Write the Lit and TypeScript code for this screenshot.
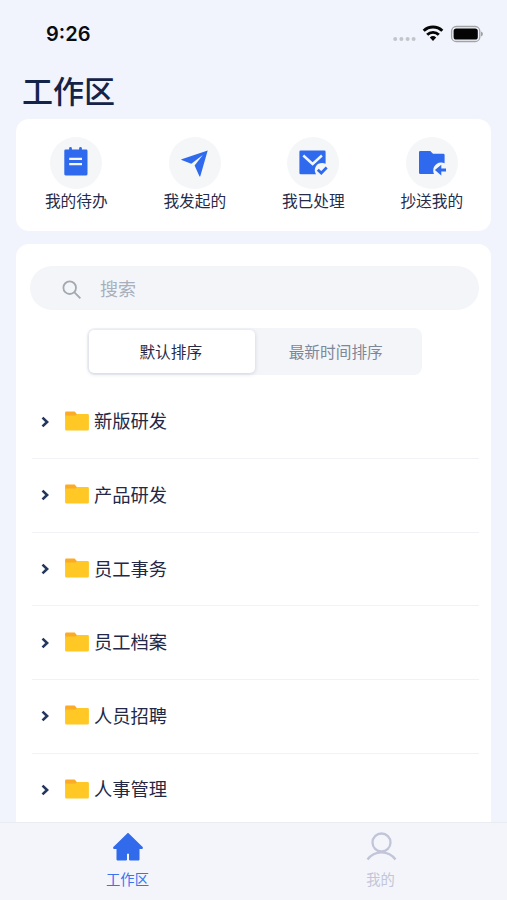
import { LitElement, html, css, svg } from "lit";
import { customElement } from "lit/decorators.js";
import { classMap } from "lit/directives/class-map.js";

const actions = [
  {
    label: "我的待办",
    icon: svg`<path fill="#2f69ee" d="M15.600 12.600h3.500v-1.100a1.400 1.400 0 0 1 2.800 0v1.100h7.200v-1.100a1.400 1.400 0 0 1 2.800 0v1.100h4.300a1.300 1.300 0 0 1 1.300 1.300v23.200a1.300 1.300 0 0 1-1.300 1.300h-20.600a1.300 1.300 0 0 1-1.300-1.300v-23.200a1.300 1.300 0 0 1 1.300-1.300z"/>
      <path stroke="#f4f6f9" stroke-width="2.300" d="M19.200 21.900h12.800M19.200 27.200h12.800"/>`,
  },
  {
    label: "我发起的",
    icon: svg`<path fill="#2f69ee" d="M38.700 13.600 12.600 22.300a.4.4 0 0 0 0 .8l9.700 3.600 11.500-8.700-8.200 10.600 4.800 10.700a.5.5 0 0 0 .9-.1z"/>`,
  },
  {
    label: "我已处理",
    icon: svg`<path fill="#2f69ee" d="M13.700 13.400h23.600a1.300 1.300 0 0 1 1.300 1.300v12.100a7.300 7.300 0 0 0-10.800 6.200c0 1.700.5 3.100 1.300 4.300H13.700a1.300 1.300 0 0 1-1.300-1.300V14.700a1.300 1.300 0 0 1 1.300-1.300z"/>
      <path fill="none" stroke="#f4f6f9" stroke-width="2.400" d="m16.300 18.500 9.300 8.500 9.300-8.500"/>
      <path fill="none" stroke="#2f69ee" stroke-width="2.700" d="m30.800 32.700 3.500 3.300 5.400-5.500"/>`,
  },
  {
    label: "抄送我的",
    icon: svg`<path fill="#2f69ee" d="M14.300 13.900h10l2.700 2.900h10.300a1.300 1.300 0 0 1 1.300 1.300v8.200a8 8 0 0 0-11.400 7.100 8 8 0 0 0 .8 3.600H14.300a1.300 1.300 0 0 1-1.300-1.300V15.200a1.300 1.300 0 0 1 1.300-1.300z"/>
      <path fill="#2f69ee" d="m28.900 33.100 6.400-5.300v3.800h4.700v3h-4.700v3.800z"/>`,
  },
];

const folders = ["新版研发", "产品研发", "员工事务", "员工档案", "人员招聘", "人事管理"];

@customElement("status-bar")
class StatusBar extends LitElement {
  static styles = css`
    :host { display: flex; justify-content: space-between; align-items: center; height: 67px; padding: 0 23px 0 46px; box-sizing: border-box; }
    .time { font: 600 20px/24px Inter, sans-serif; letter-spacing: 0; color: #0b0c0f; }
    svg { display: block; }
  `;
  render() {
    return html`<span class="time">9:26</span>
      <svg width="92" height="20" viewBox="392 23.500 92 20">
        <g fill="#c3c5cc"><circle cx="395.200" cy="38.400" r="2"/><circle cx="401.400" cy="38.400" r="2"/><circle cx="407.600" cy="38.400" r="2"/><circle cx="413.600" cy="38.400" r="2"/></g>
        <g fill="none" stroke="#050505" stroke-width="2.900"><path d="M423.700 30.300a13.400 13.400 0 0 1 18.600 0"/><path d="M427.200 34.200a8.300 8.300 0 0 1 11.600 0"/></g>
        <path fill="#050505" d="M429.800 37.100a4.700 4.700 0 0 1 6.400 0L433 40.400z"/>
        <rect x="451.600" y="26" width="28.200" height="15" rx="4.600" fill="none" stroke="#a2a3a7" stroke-width="1.300"/>
        <rect x="453.600" y="28" width="24.200" height="11" rx="2.600" fill="#050505"/>
        <path fill="#8f9095" d="M481.200 31.100a2.600 2.600 0 0 1 0 4.800z"/>
      </svg>`;
  }
}

@customElement("quick-actions")
class QuickActions extends LitElement {
  static styles = css`
    :host { display: grid; grid-template-columns: repeat(4, 1fr); height: 112px; box-sizing: border-box; padding: 18px 0 0 1px; background: #fff; border-radius: 13px; }
    .item { display: flex; flex-direction: column; align-items: center; }
    .disc { width: 52px; height: 52px; border-radius: 50%; background: #f4f6f8; }
    svg { display: block; }
    .label { font-size: 15.700px; line-height: 24px; color: #252b48; white-space: nowrap; }
  `;
  render() {
    return actions.map(
      (a) => html`<div class="item">
        <div class="disc"><svg width="52" height="52" viewBox="0 0 52 52">${a.icon}</svg></div>
        <span class="label">${a.label}</span>
      </div>`
    );
  }
}

@customElement("folder-row")
class FolderRow extends LitElement {
  static properties = { label: {} };
  declare label: string;
  static styles = css`
    :host { display: flex; align-items: center; height: 73.600px; box-sizing: border-box; padding: 0 0 3px 7px; border-bottom: 1px solid #f1f2f5; }
    .chevron { width: 12px; height: 12px; margin: 3px 14px 0 0; }
    .folder { width: 24px; height: 20px; margin: 1px 5px 0 0; }
    .label { font-size: 18.300px; line-height: 28px; color: #222846; }
  `;
  render() {
    return html`<svg class="chevron" viewBox="0 0 12 12"><path fill="none" stroke="#24375f" stroke-width="2.600" d="m3.500 1.600 4.600 4.400-4.600 4.400"/></svg>
      <svg class="folder" viewBox="0 0 24 20"><path fill="#fbab26" d="M1.300.500h8.400l2.300 2.800v4H.100V1.700A1.200 1.200 0 0 1 1.300.500z"/><path fill="#ffc825" d="M.100 4.600h10.200l1.800-1.700h10.500A1.300 1.300 0 0 1 23.900 4.200v14a1.300 1.300 0 0 1-1.300 1.300H1.400A1.300 1.300 0 0 1 .100 18.200z"/></svg>
      <span class="label">${this.label}</span>`;
  }
}

@customElement("tab-bar")
class TabBar extends LitElement {
  static styles = css`
    :host { display: grid; grid-template-columns: 1fr 1fr; height: 78.500px; box-sizing: border-box; border-top: 1.500px solid #e9ecf1; background: #f3f5fa; padding-left: 1px; }
    .tab { display: flex; flex-direction: column; align-items: center; padding-top: 8px; color: #c3c6d8; font-size: 14.300px; line-height: 22px; }
    .active { color: #3a72ef; }
    svg { display: block; margin-bottom: 5px; }
  `;
  render() {
    const tabs = [
      { label: "工作区", active: true, icon: svg`<path fill="#316bec" stroke="#316bec" stroke-width="1.600" stroke-linejoin="round" d="M16 2.700 2.200 16.200a.6.6 0 0 0 .4 1.100H5.300V28.600h8.900v-6.600h3.600v6.600h8.900V17.300h2.700a.6.6 0 0 0 .4-1.100z"/>` },
      { label: "我的", active: false, icon: svg`<g fill="none" stroke="#c2c5d8" stroke-width="2.300"><circle cx="16.500" cy="11.500" r="9"/><path d="M2.500 28.500a17.200 17.200 0 0 1 28 0"/></g>` },
    ];
    return tabs.map(
      (t) => html`<div class=${classMap({ tab: true, active: t.active })}>
        <svg width="32" height="32" viewBox="0 0 32 32">${t.icon}</svg><span>${t.label}</span>
      </div>`
    );
  }
}

@customElement("app-root")
class AppRoot extends LitElement {
  static styles = css`
    :host { display: flex; flex-direction: column; height: 900px; overflow: hidden; background: #f1f4fc; font-family: "Noto Sans CJK SC", sans-serif; }
    status-bar, tab-bar { flex: none; }
    h1 { flex: none; margin: 0 0 6px 22px; height: 46px; font-size: 31px; line-height: 45px; font-weight: 500; color: #142449; }
    quick-actions { flex: none; margin: 0 16px; }
    .panel { flex: 1; min-height: 0; overflow: hidden; margin: 13px 16px 0; padding: 22px 12px 0 14px; background: #fff; border-radius: 13px 13px 0 0; }
    .search { display: flex; align-items: center; height: 44px; border-radius: 22px; background: #f3f5f9; padding-left: 32px; }
    .search svg { margin: 3px 18px 0 0; }
    .search span { font-size: 18px; line-height: 28px; color: #a8b0bd; }
    .sort { display: grid; grid-template-columns: 1fr 1fr; width: 335px; height: 47px; box-sizing: border-box; padding: 2px; margin: 18px 0 0 57px; border-radius: 8px; background: #f3f5f9; }
    .option { display: flex; align-items: center; justify-content: center; padding-right: 3px; font-size: 15.700px; color: #7d879a; }
    .selected { padding-right: 2px; background: #fff; border-radius: 5px; color: #252b48; box-shadow: 0 1px 4px #1c2b4b2b; }
    .list { margin: 10.600px 0 0 2px; }
  `;
  render() {
    return html`<status-bar></status-bar>
      <h1>工作区</h1>
      <quick-actions></quick-actions>
      <section class="panel">
        <div class="search">
          <svg width="20" height="20" viewBox="0 0 20 20" fill="none" stroke="#a4a9b1" stroke-width="1.800"><circle cx="7.700" cy="7.700" r="6.300"/><path d="m12.200 12.200 6.200 6.200"/></svg>
          <span>搜索</span>
        </div>
        <div class="sort"><div class="option selected">默认排序</div><div class="option">最新时间排序</div></div>
        <div class="list">${folders.map((f) => html`<folder-row .label=${f}></folder-row>`)}</div>
      </section>
      <tab-bar></tab-bar>`;
  }
}
